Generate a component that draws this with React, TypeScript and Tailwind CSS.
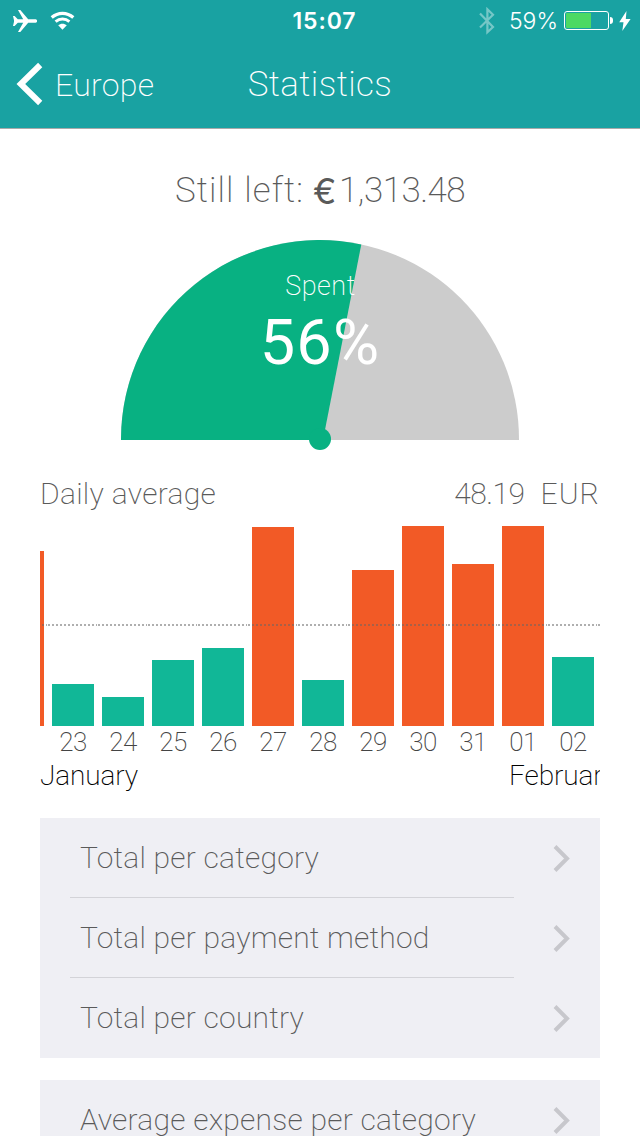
type Day = { label: string; height: number };

const AVERAGE_HEIGHT = 100;

const days: Day[] = [
  { label: '23', height: 42 },
  { label: '24', height: 29 },
  { label: '25', height: 66 },
  { label: '26', height: 78 },
  { label: '27', height: 199 },
  { label: '28', height: 46 },
  { label: '29', height: 156 },
  { label: '30', height: 200 },
  { label: '31', height: 162 },
  { label: '01', height: 200 },
  { label: '02', height: 69 },
];

function StatusBar() {
  return (
    <div className="grid h-10 grid-cols-3 items-center font-['Inter',sans-serif] text-[23px] leading-10">
      <div className="flex items-center pl-[13px]">
        <svg width="24" height="22" viewBox="0 0 24 22" fill="currentColor">
          <path d="M0 6h1.600l3.200 3.300h5.400L5 0h2.300l7.900 9.300H22c1.200 0 2.200.8 2.200 1.700s-1 1.700-2.200 1.700h-6.800L7.300 22H5l5.200-9.300H4.800L1.600 16H0l1-4.300v-1.400z" />
        </svg>
        <svg className="ml-[13px]" width="25" height="20" viewBox="0 0 25 20" fill="none" stroke="currentColor">
          <path d="M1.700 6.500C8 .9 17 .9 23.300 6.500" strokeWidth="3.200" />
          <path d="M5.600 10.700C9.700 7.200 15.300 7.200 19.400 10.700" strokeWidth="3" />
          <path d="M8.200 14.300C10.600 12.200 14.400 12.200 16.800 14.300L12.500 18.700z" fill="currentColor" stroke="none" />
        </svg>
      </div>
      <p className="pt-px pl-[9px] text-center font-semibold tracking-[0.900px]">15:07</p>
      <div className="flex items-center justify-end pr-[9px]">
        <svg className="mr-[14px] opacity-40" width="16" height="28" viewBox="0 0 16 28" fill="none" stroke="currentColor" strokeWidth="2.200">
          <path d="M1 6.500l13 13.500-5.600 5.300V2.300L14 7.800 1 20.500" />
        </svg>
        <span className="pt-px font-light">59%</span>
        <span className="ml-[6px] flex h-[19px] w-[45px] items-center rounded-[3px] border border-white p-px">
          <span className="h-[15px] w-[25px] rounded-l-[1px] bg-[#4cd964]" />
        </span>
        <span className="ml-px h-[7px] w-[3px] rounded-r-full bg-white" />
        <svg className="ml-[6px]" width="12" height="20" viewBox="0 0 12 20" fill="currentColor">
          <path d="M7.500 0L.2 11.200h4.300L3.300 20 11.600 7.900H6.800z" />
        </svg>
      </div>
    </div>
  );
}

function NavBar() {
  return (
    <div className="grid h-[88px] grid-cols-3 items-center">
      <div className="flex items-center pl-4">
        <svg width="27" height="44" viewBox="0 0 27 44" fill="none" stroke="currentColor" strokeWidth="6">
          <path d="M24.200 3L4.800 22l19.400 19" />
        </svg>
        <span className="pt-[2px] pl-3 text-[32px] leading-10 tracking-[0.300px]">Europe</span>
      </div>
      <h1 className="pt-[2px] text-center text-[35px] leading-10 tracking-[0.400px]">Statistics</h1>
    </div>
  );
}

function Gauge() {
  return (
    <div className="mt-[27px] grid h-[222px] justify-center">
      <svg className="col-start-1 row-start-1" width="400" height="212" viewBox="120 240 400 212">
        <path d="M121 440V439A199 199 0 0 1 519 439V440z" fill="#ccc" />
        <path d="M121 440V439A199 199 0 0 1 361.300 244.400L323 440z" fill="#08b182" />
        <circle cx="320" cy="439" r="11" fill="#08b182" />
      </svg>
      <div className="col-start-1 row-start-1 pt-[30px] text-center text-white">
        <p className="pl-px text-[27px] leading-8 tracking-[0.500px]">Spent</p>
        <p className="pt-[6px] text-[63px] leading-[70px] font-[370] tracking-[1.200px]">56%</p>
      </div>
    </div>
  );
}

function DailyChart() {
  return (
    <div className="overflow-hidden">
      <div className="grid">
        <div className="col-start-1 row-start-1 flex h-[201px] items-end gap-2">
          <div className="h-[175px] w-1 shrink-0 bg-[#f25a26]" />
          {days.map((day) => (
            <div
              key={day.label}
              className={`w-[42px] shrink-0 ${day.height > AVERAGE_HEIGHT ? 'bg-[#f25a26]' : 'bg-[#11b797]'}`}
              style={{ height: day.height }}
            />
          ))}
        </div>
        <svg className="col-start-1 row-start-1 mt-[99px]" width="560" height="2">
          <defs>
            <pattern id="average" x="8" y="0" width="50" height="2" patternUnits="userSpaceOnUse">
              <path d="M0 1H48" stroke="#666" strokeOpacity="0.52" strokeWidth="2" strokeDasharray="2 2" />
              <path d="M48 1H49" stroke="#666" strokeOpacity="0.52" strokeWidth="2" />
            </pattern>
          </defs>
          <rect width="560" height="2" fill="url(#average)" />
        </svg>
      </div>
      <div className="flex gap-2 pl-3 text-[26px] leading-8 tracking-[-0.500px] text-[#444]">
        {days.map((day) => (
          <span key={day.label} className="w-[42px] shrink-0 text-center">
            {day.label}
          </span>
        ))}
      </div>
      <div className="flex text-[28px] leading-9 tracking-[-0.100px] text-black">
        <span className="w-[469px] shrink-0">January</span>
        <span>February</span>
      </div>
    </div>
  );
}

function Row({ label, divided }: { label: string; divided?: boolean }) {
  return (
    <li className="flex h-20 items-stretch pl-[30px]">
      <div className={`flex w-[444px] items-center border-b pl-[10px] ${divided ? 'border-[#d3d3d8]' : 'border-transparent'}`}>
        <span className="whitespace-nowrap">{label}</span>
      </div>
      <svg className="mt-[27px] ml-[39px]" width="17" height="27" viewBox="0 0 17 27" fill="none" stroke="#c7c7cc" strokeWidth="4">
        <path d="M2 1.500L14 13.500 2 25.500" />
      </svg>
    </li>
  );
}

export default function App() {
  return (
    <div className="h-[1136px] overflow-hidden bg-white font-['Roboto',sans-serif] font-extralight text-[#5a5a5a]">
      <header className="border-b border-[#a8aaaa] bg-[#19a2a2] text-white">
        <StatusBar />
        <NavBar />
      </header>
      <main className="px-10 pt-10">
        <p className="flex h-11 items-center justify-center text-[35px] leading-11">
          <span className="tracking-[1.100px]">Still left:</span>
          <span className="ml-[9px] w-[26px] font-['Inter',sans-serif] text-[35px] font-normal">€</span>
          <span className="tracking-[-0.500px]">1,313.48</span>
        </p>
        <Gauge />
        <div className="mt-[14px] flex h-[49px] justify-between text-[30px] leading-9">
          <span className="tracking-[0.300px]">Daily average</span>
          <span className="flex gap-4">
            <span className="tracking-[-0.500px]">48.19</span>
            <span className="tracking-[1px]">EUR</span>
          </span>
        </div>
        <DailyChart />
        <ul className="mt-6 bg-[#efeff4] text-[30px] leading-9 tracking-[0.220px]">
          <Row label="Total per category" divided />
          <Row label="Total per payment method" divided />
          <Row label="Total per country" />
        </ul>
        <ul className="mt-[22px] bg-[#efeff4] text-[30px] leading-9 tracking-[0.220px]">
          <Row label="Average expense per category" />
        </ul>
      </main>
    </div>
  );
}
